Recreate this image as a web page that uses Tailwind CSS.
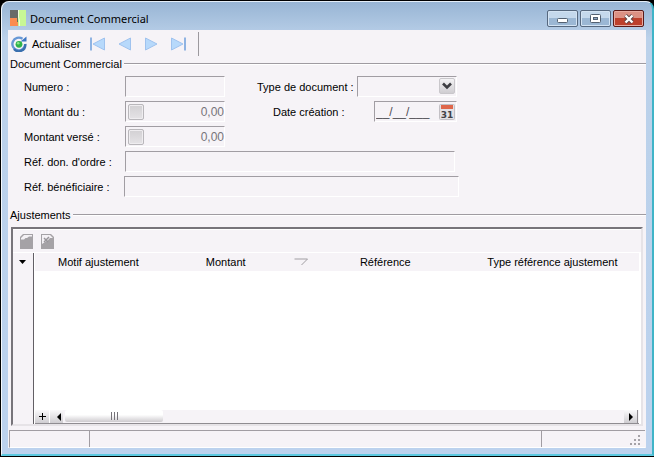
<!DOCTYPE html>
<html lang="fr">
<head>
<meta charset="utf-8">
<title>Document Commercial</title>
<script src="https://cdn.jsdelivr.net/npm/@tailwindcss/browser@4"></script>
</head>
<body class="bg-black">
<div class="flex h-screen flex-col rounded-t-lg border-t border-r-2 border-b-2 border-l border-t-[#e4eef8] border-l-[#f4f8fc] border-r-[#3fb4c8] border-b-[#5cc9e0] bg-[#bcd2ec] bg-linear-to-b from-[#98b5d4] from-0% via-[#bbd1ea] via-8% to-[#bcd2ee] ml-px mb-px mt-px max-h-[calc(100vh-2px)] px-1.5 pb-1.5 text-[11px] leading-4 text-black font-['Liberation_Sans',Arial,sans-serif]">

  <header class="flex h-7 shrink-0 items-start pl-0.5">
    <svg class="mt-2 h-4 w-4" viewBox="0 0 16 16" aria-hidden="true">
      <rect width="8" height="8" fill="#686b68"/><rect y="8" width="8" height="8" fill="#fb8c50"/><rect x="8" width="8" height="16" fill="#c8f795"/><path d="M8.500 0v7l1 4v5" stroke="#f2ffdf" fill="none"/><path d="M7.500 5v7" stroke="#66705a" fill="none"/>
    </svg>
    <h1 class="ml-1 mt-2 flex-1 font-['Noto_Sans',sans-serif] text-[11px] font-normal leading-[18px]">Document Commercial</h1>
    <div class="mt-2 flex gap-0.5 pr-0.5">
      <button type="button" aria-label="Réduire" class="flex h-[17px] w-[31px] items-center justify-center rounded-xs border border-[#56687f] bg-linear-to-b from-[#c4d8ec] from-50% to-[#9bb7d4] to-50% shadow-[inset_0_0_0_1px_#d3e3f3]">
        <svg width="11" height="11" viewBox="0 0 11 11"><rect x=".5" y="5.500" width="10" height="4" rx="1" fill="#fff" stroke="#536071"/></svg>
      </button>
      <button type="button" aria-label="Agrandir" class="flex h-[17px] w-[31px] items-center justify-center rounded-xs border border-[#56687f] bg-linear-to-b from-[#c4d8ec] from-50% to-[#9bb7d4] to-50% shadow-[inset_0_0_0_1px_#d3e3f3]">
        <svg width="11" height="9" viewBox="0 0 11 9"><rect x=".5" y=".5" width="10" height="8" rx="1" fill="#fff" stroke="#536071"/><rect x="3.500" y="3.500" width="4" height="2" fill="#8ca6c2" stroke="#536071"/></svg>
      </button>
      <button type="button" aria-label="Fermer" class="flex h-[17px] w-[31px] items-center justify-center rounded-xs border border-[#5a1a18] bg-linear-to-b from-[#dc9184] from-50% to-[#bd402c] to-50% shadow-[inset_0_0_0_1px_#e7aaa0]">
        <svg width="12" height="10" viewBox="0 0 12 10"><path d="M2.500 1.500l7 7M9.500 1.500l-7 7" stroke="#5b4547" stroke-width="4"/><path d="M2.500 1.500l7 7M9.500 1.500l-7 7" stroke="#fff" stroke-width="2.400"/></svg>
      </button>
    </div>
  </header>

  <main class="flex min-h-0 flex-1 flex-col bg-[#f6f3f7]">
    <nav class="flex h-7 shrink-0 items-center pl-0.5">
      <button type="button" class="flex items-center gap-1">
        <svg width="18" height="16" viewBox="0 0 18 16" aria-hidden="true"><path d="M12.500 2.800A6.400 6.400 0 1 0 15.200 8" fill="none" stroke="#6798d6" stroke-width="2.400"/><path d="M4 13A6.400 6.400 0 0 0 15.200 8" fill="none" stroke="#396fae" stroke-width="2.400"/><path d="M10.500 5.500h6V.5z" fill="#3c76c4"/><circle cx="9" cy="8.300" r="3.400" fill="#2fb34b"/><circle cx="8.200" cy="7.200" r="1.300" fill="#8be38e"/></svg>
        <span>Actualiser</span>
      </button>
      <div class="ml-2.5 flex items-center gap-3">
        <button type="button" aria-label="Premier"><svg width="15" height="14" viewBox="0 0 15 14"><path d="M1 .5v13" stroke="#8fb3e2" stroke-width="2"/><path d="M14.500 1v12L3 7z" fill="#b7d9fb" stroke="#9fc2ee"/></svg></button>
        <button type="button" aria-label="Précédent"><svg width="15" height="14" viewBox="0 0 15 14"><path d="M13.500 1v12L2 7z" fill="#b7d9fb" stroke="#9fc2ee"/></svg></button>
        <button type="button" aria-label="Suivant"><svg width="15" height="14" viewBox="0 0 15 14"><path d="M1.500 1v12L13 7z" fill="#b7d9fb" stroke="#9fc2ee"/></svg></button>
        <button type="button" aria-label="Dernier"><svg width="15" height="14" viewBox="0 0 15 14"><path d="M14 .5v13" stroke="#8fb3e2" stroke-width="2"/><path d="M.5 1v12L12 7z" fill="#b7d9fb" stroke="#9fc2ee"/></svg></button>
      </div>
      <div class="ml-3 h-6 w-px bg-[#9c999e]"></div>
    </nav>

    <form class="flex min-h-0 flex-1 flex-col">
      <section class="shrink-0">
        <div class="flex h-3 items-center gap-0.5 pl-0.5"><h2 class="font-normal">Document Commercial</h2><div class="h-0.5 flex-1 border-b border-t border-b-white border-t-[#9f9ba1]"></div></div>
        <div class="flex flex-col gap-1 pl-4 pt-1.5">
          <div class="flex items-center">
            <label for="num" class="w-[101px]">Numero :</label>
            <input id="num" class="h-[21px] w-[100px] border border-b-white border-l-[#a19da3] border-r-white border-t-[#a19da3] px-1">
            <label for="type" class="ml-8 w-[100px]">Type de document :</label>
            <div class="relative">
              <select id="type" class="block h-[21px] w-[100px] appearance-none border border-b-white border-l-[#a19da3] border-r-white border-t-[#a19da3] bg-transparent px-1"><option></option></select>
              <span class="pointer-events-none absolute right-0.5 top-0.5 flex h-4 w-4 items-center justify-center rounded-xs border border-[#c9c7cb] bg-linear-to-b from-[#f4f3f5] to-[#cfcdd1]"><svg width="10" height="8" viewBox="0 0 10 8"><path d="M1 1.500l4 4 4-4" fill="none" stroke="#3d3d42" stroke-width="2.600"/></svg></span>
            </div>
          </div>
          <div class="flex items-center">
            <label for="du" class="w-[101px]">Montant du :</label>
            <div class="flex h-[21px] w-[100px] items-center border border-b-white border-l-[#a19da3] border-r-white border-t-[#a19da3] pl-0.5">
              <button type="button" aria-label="Calculer le montant du" class="h-4 w-4 shrink-0 rounded-xs border border-[#b9b7bb] bg-linear-to-b from-[#d2d0d3] to-[#e5e3e6] shadow-[inset_0_0_0_1px_#efedf0]"></button>
              <input id="du" value="0,00" class="w-full min-w-0 text-right text-[12px] text-[#77747a]">
            </div>
            <label for="date" class="ml-12 w-[101px]">Date création :</label>
            <div class="flex h-[21px] w-[83px] items-center border border-b-white border-l-[#a19da3] border-r-white border-t-[#a19da3] pl-px">
              <input id="date" value="__/__/___" class="w-full min-w-0 text-[12px] text-[#504d53]">
              <button type="button" aria-label="Calendrier" class="mr-px shrink-0"><svg width="16" height="16" viewBox="0 0 16 16"><rect x=".5" y=".5" width="15" height="15" rx="1" fill="#e4e1e5" stroke="#c3c0c5"/><rect x="2" y="1" width="12" height="4" fill="#df674b"/><text x="8" y="14" text-anchor="middle" font-family="DejaVu Sans" font-weight="bold" font-size="9" fill="#414147">31</text></svg></button>
            </div>
          </div>
          <div class="flex items-center">
            <label for="verse" class="w-[101px]">Montant versé :</label>
            <div class="flex h-[21px] w-[100px] items-center border border-b-white border-l-[#a19da3] border-r-white border-t-[#a19da3] pl-0.5">
              <button type="button" aria-label="Calculer le montant versé" class="h-4 w-4 shrink-0 rounded-xs border border-[#b9b7bb] bg-linear-to-b from-[#d2d0d3] to-[#e5e3e6] shadow-[inset_0_0_0_1px_#efedf0]"></button>
              <input id="verse" value="0,00" class="w-full min-w-0 text-right text-[12px] text-[#77747a]">
            </div>
          </div>
          <div class="flex items-center">
            <label for="ordre" class="w-[101px]">Réf. don. d'ordre :</label>
            <input id="ordre" class="h-[21px] w-[330px] border border-b-white border-l-[#a19da3] border-r-white border-t-[#a19da3] px-1">
          </div>
          <div class="flex items-center">
            <label for="benef" class="w-[100px]">Réf. bénéficiaire :</label>
            <input id="benef" class="h-[21px] w-[335px] border border-b-white border-l-[#a19da3] border-r-white border-t-[#a19da3] px-1">
          </div>
        </div>
      </section>

      <section class="flex min-h-0 flex-1 flex-col pt-3">
        <div class="flex h-3 shrink-0 items-center gap-0.5 pl-0.5"><h2 class="font-normal">Ajustements</h2><div class="h-0.5 flex-1 border-b border-t border-b-white border-t-[#9f9ba1]"></div></div>
        <div class="mx-[3px] mt-1.5 flex min-h-0 flex-1 flex-col border-2 border-b-[#e6e3e7] border-l-[#77747a] border-r-[#e6e3e7] border-t-[#77747a]">
          <div class="flex h-6 shrink-0 items-center gap-2 border-b border-white border-t pl-[7px]">
            <button type="button" aria-label="Ajouter"><svg width="13" height="15" viewBox="0 0 13 15"><path d="M3 0h10v15H0V3z" fill="#a5a2a6"/><path d="M1 5.500V4l3-3h8v1.500H9L7 4H5.500L4 5.500z" fill="#f4f1f5"/></svg></button>
            <button type="button" aria-label="Supprimer"><svg width="13" height="15" viewBox="0 0 13 15"><path d="M0 0h10l3 3v12H0z" fill="#a5a2a6"/><path d="M1 10V1h8l3 3H9L6 7 4 8z" fill="#f4f1f5"/><path d="M3 4l4 4M8 3L3 8" stroke="#98959a" stroke-width="1.500"/></svg></button>
          </div>
          <div class="flex min-h-0 flex-1">
            <div class="w-[21px] shrink-0 border-r border-[#625f65] pl-1.5 pt-[7px]"><svg width="7" height="4" viewBox="0 0 7 4"><path d="M0 0h7L3.500 4z" fill="#000"/></svg></div>
            <div class="flex min-w-0 flex-1 flex-col bg-white pl-px pr-0.5">
              <table class="w-full table-fixed">
                <thead><tr class="h-[18px] bg-[#f6f3f7]">
                  <th class="w-[21%] p-0 font-normal">Motif ajustement</th>
                  <th class="w-[25%] p-0 font-normal"><div class="flex items-center pl-11"><span>Montant</span><svg class="ml-12" width="15" height="8" viewBox="0 0 15 8"><path d="M.5 1h13L7.500 7" fill="none" stroke="#a19ea3"/></svg></div></th>
                  <th class="w-[24%] p-0 font-normal">Référence</th>
                  <th class="w-[30%] p-0 pl-2 font-normal">Type référence ajustement</th>
                </tr></thead>
                <tbody></tbody>
              </table>
              <div class="mt-auto flex h-3.5 shrink-0 items-stretch border-b border-[#8f8c91] bg-[#f6f3f7]">
                <button type="button" aria-label="Ajouter une ligne" class="flex w-3.5 items-center justify-center bg-linear-to-b from-[#faf9fb] to-[#cfcdd1]"><svg width="7" height="7" viewBox="0 0 7 7"><path d="M3.500 0v7M0 3.500h7" stroke="#000"/></svg></button>
                <button type="button" aria-label="Défiler à gauche" class="flex w-3.5 items-center justify-end border-l border-white bg-linear-to-b from-[#faf9fb] to-[#cfcdd1] pr-0.5"><svg width="4" height="8" viewBox="0 0 4 8"><path d="M4 0v8L0 4z"/></svg></button>
                <div class="ml-0.5 flex h-3 w-[98px] items-center justify-center gap-0.5 rounded-xs bg-linear-to-b from-white from-40% to-[#cecbcf]"><i class="h-2 w-px bg-[#77747a]"></i><i class="h-2 w-px bg-[#77747a]"></i><i class="h-2 w-px bg-[#77747a]"></i></div>
                <button type="button" aria-label="Défiler à droite" class="ml-auto mr-px flex w-3.5 items-center justify-center border-r border-[#8f8c91] bg-linear-to-b from-[#faf9fb] to-[#cfcdd1]"><svg width="4" height="8" viewBox="0 0 4 8"><path d="M0 0v8l4-4z"/></svg></button>
              </div>
            </div>
          </div>
        </div>
      </section>
    </form>

    <footer class="mx-px mt-1 flex h-[18px] shrink-0 border-b border-l border-t border-b-white border-l-[#a19da3] border-t-[#a19da3]">
      <div class="w-20 border-r border-[#a19da3]"></div>
      <div class="flex-1"></div>
      <div class="flex w-[104px] items-end justify-end border-l border-[#a19da3] pb-px pr-1"><svg width="11" height="11" viewBox="0 0 11 11" fill="#a5a2a7"><path d="M8 0h2v2H8zM8 4h2v2H8zM8 8h2v2H8zM4 4h2v2H4zM4 8h2v2H4zM0 8h2v2H0z"/></svg></div>
    </footer>
  </main>
</div>
</body>
</html>
